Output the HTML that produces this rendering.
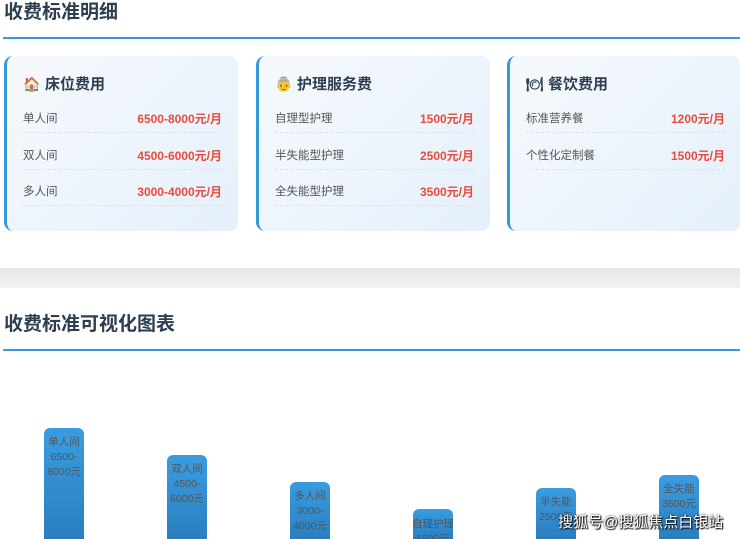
<!DOCTYPE html>
<html><head><meta charset="utf-8"><style>
*{margin:0;padding:0;box-sizing:border-box}
body{width:740px;height:539px;overflow:hidden;background:#fff;font-family:"Liberation Sans","Noto Sans CJK SC",sans-serif;position:relative}
h2{position:absolute;left:4px;font-size:19px;font-weight:bold;color:#2c3e50;line-height:24px}
.line{position:absolute;left:3px;right:0;height:2px;background:#3498db}
.card{position:absolute;top:56px;width:234px;height:175px;border-radius:9px;border-left:3px solid #3498db;background:linear-gradient(135deg,#f6f9fc,#e5f0fb)}
.ct{position:absolute;font-size:15px;font-weight:bold;color:#2c3e50;line-height:20px}
.ct span{display:inline-block;width:17px;margin-right:5px;font-size:14px}
.row{position:absolute;left:16px;right:16px;height:23px;border-bottom:1px dashed #dde3ea;font-size:11.5px;color:#555;line-height:18px}
.row b{position:absolute;right:0;top:0;color:#e74c3c;font-size:12px}
.row i{font-style:normal}
.band{position:absolute;left:0;right:0;top:268px;height:20px;background:linear-gradient(#e6e7e9,#f1f2f3)}
.bar{position:absolute;width:40px;bottom:0;border-radius:6px 6px 0 0;background:linear-gradient(#3a9ce0,#2a7fbf);color:#555;font-size:10.5px;line-height:15px;text-align:center;padding-top:7px;overflow:hidden;white-space:nowrap}
.bar span{display:block;margin:0 -10px}
.wm{position:absolute;left:558px;top:511px;font-size:15px;color:#fff;text-shadow:0 0 2px #000,1px 1px 1px #000;white-space:nowrap}
</style></head><body>
<h2 style="top:1px">收费标准明细</h2>
<div class="line" style="top:37px"></div>

<div class="card" style="left:4px">
<div class="ct" style="top:18px;left:16px"><span>🏠</span>床位费用</div>
<div class="row" style="top:54px"><i>单人间</i><b>6500-8000元/月</b></div>
<div class="row" style="top:91px"><i>双人间</i><b>4500-6000元/月</b></div>
<div class="row" style="top:127px"><i>多人间</i><b>3000-4000元/月</b></div>
</div>
<div class="card" style="left:256px">
<div class="ct" style="top:18px;left:16px"><span>👵</span>护理服务费</div>
<div class="row" style="top:54px"><i>自理型护理</i><b>1500元/月</b></div>
<div class="row" style="top:91px"><i>半失能型护理</i><b>2500元/月</b></div>
<div class="row" style="top:127px"><i>全失能型护理</i><b>3500元/月</b></div>
</div>
<div class="card" style="left:507px">
<div class="ct" style="top:18px;left:16px"><span>🍽</span>餐饮费用</div>
<div class="row" style="top:54px"><i>标准营养餐</i><b>1200元/月</b></div>
<div class="row" style="top:91px"><i>个性化定制餐</i><b>1500元/月</b></div>
</div>

<div class="band"></div>
<h2 style="top:313px">收费标准可视化图表</h2>
<div class="line" style="top:349px"></div>

<div class="bar" style="left:44px;height:111px">单人间<br>6500-<br>8000元</div>
<div class="bar" style="left:167px;height:84px">双人间<br>4500-<br>6000元</div>
<div class="bar" style="left:290px;height:57px">多人间<br>3000-<br>4000元</div>
<div class="bar" style="left:413px;height:30px;padding-top:8px"><span>自理护理</span><span>1500元</span></div>
<div class="bar" style="left:536px;height:51px">半失能<br>2500元</div>
<div class="bar" style="left:659px;height:64px">全失能<br>3500元</div>
<div class="wm">搜狐号@搜狐焦点白银站</div>
</body></html>
